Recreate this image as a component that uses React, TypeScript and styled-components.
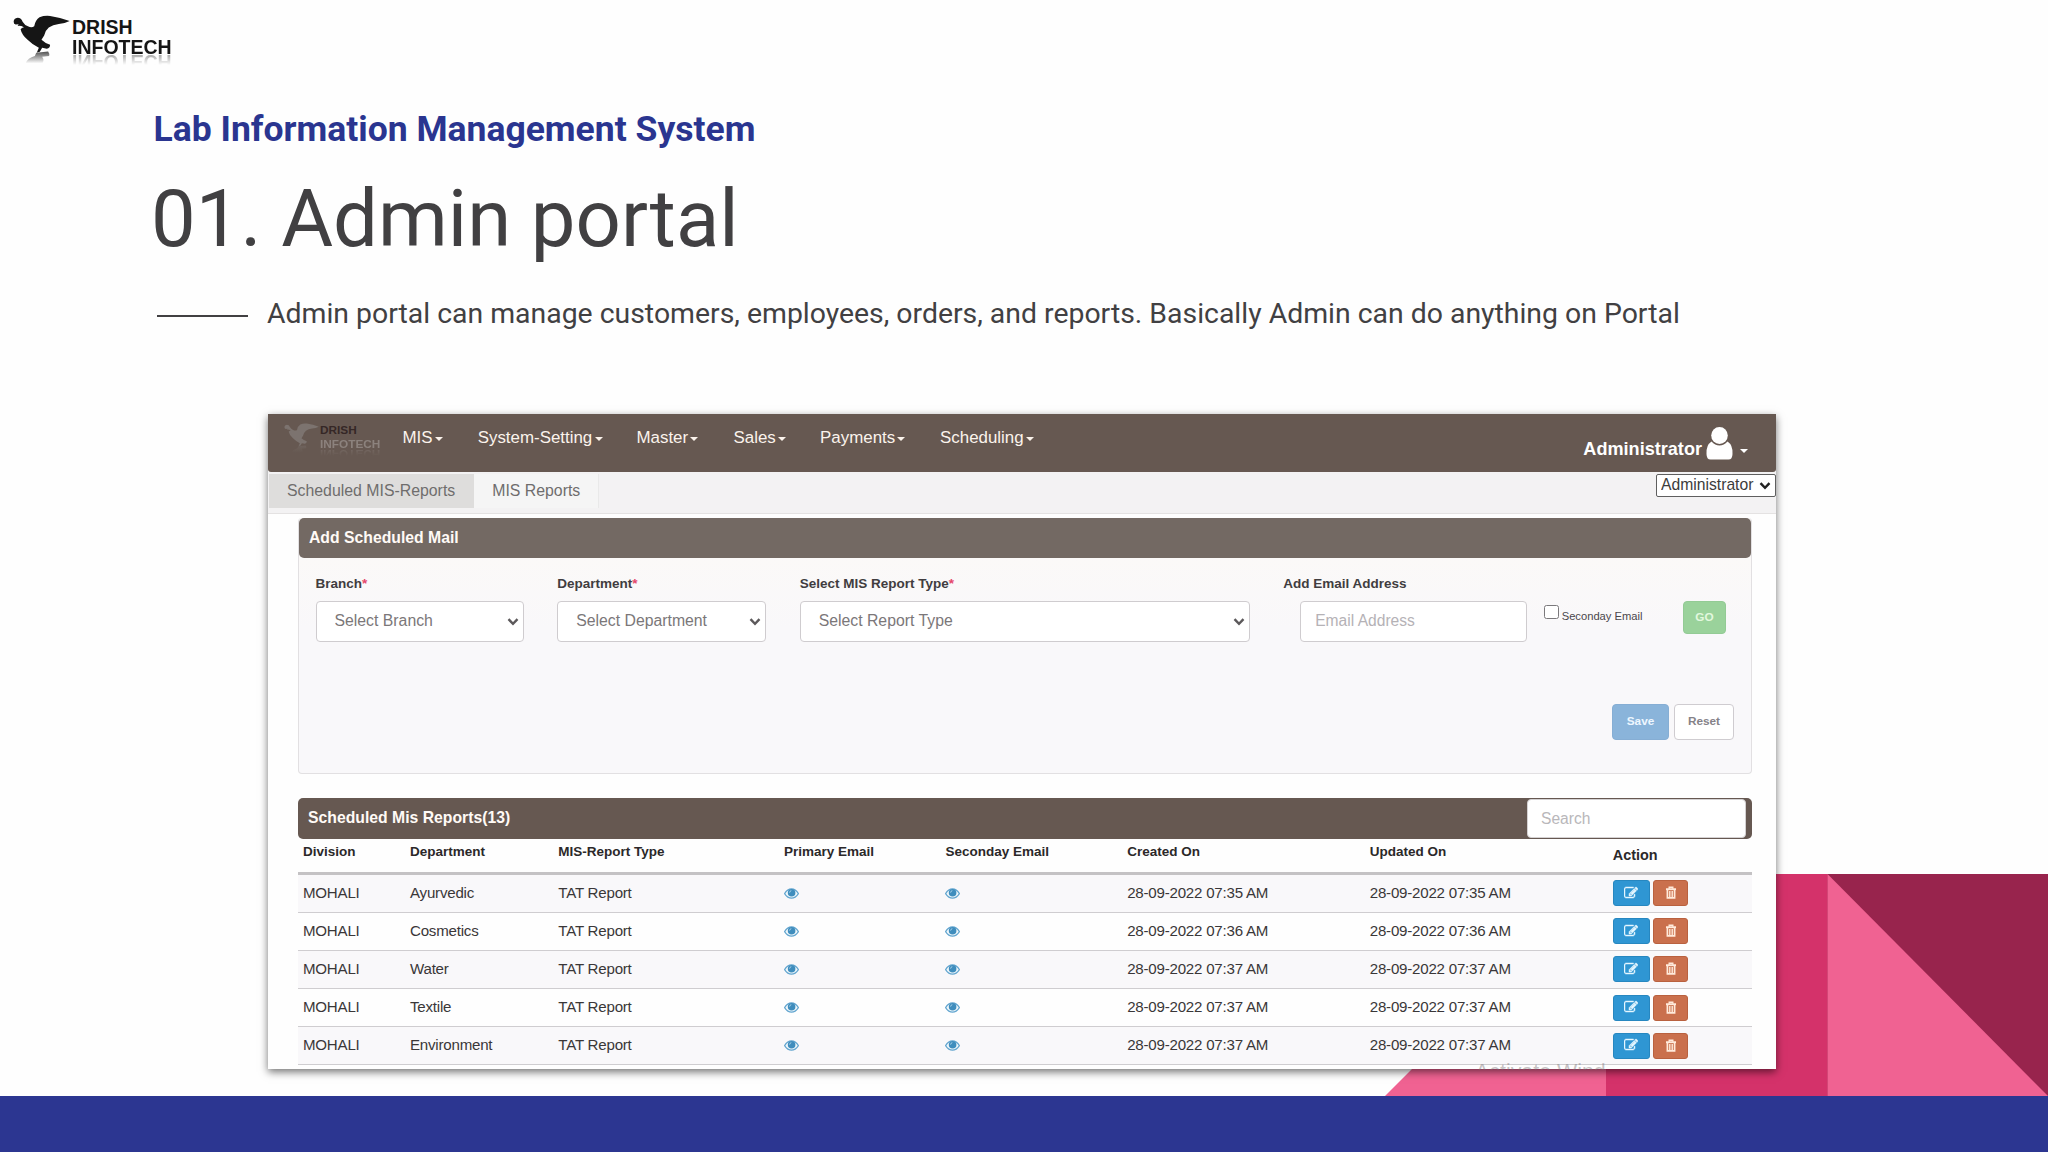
import React from "react";
import styled, { createGlobalStyle } from "styled-components";

const GlobalStyle = createGlobalStyle`
  * { box-sizing: border-box; }
  body { margin: 0; background: #fefefe; }
  input, select, button { font-family: inherit; margin: 0; }
`;

const Slide = styled.main`
  position: relative;
  display: flex;
  flex-direction: column;
  width: 2048px;
  height: 1152px;
  overflow: hidden;
  background: #fefefe;
  font-family: "Liberation Sans", Arial, sans-serif;
`;

const Scenery = styled.svg`
  position: absolute;
  right: 0;
  top: 874px;
`;

/* ---------- brand ---------- */

const BrandRow = styled.header`
  display: flex;
  height: 109px;
  padding: 15px 0 0 13px;
`;

const Brand = styled.div<{ $gap: number }>`
  display: flex;
  align-items: flex-start;
  gap: ${(p) => p.$gap}px;
`;

const Wordmark = styled.div<{ $size: number; $line: number; $top: number; $color: string }>`
  display: flex;
  flex-direction: column;
  margin-top: ${(p) => p.$top}px;
  font-size: ${(p) => p.$size}px;
  line-height: ${(p) => p.$line}px;
  font-weight: 700;
  color: ${(p) => p.$color};
`;

const SecondWord = styled.span<{ $color: string; $offset: number; $fade: number }>`
  color: ${(p) => p.$color};
  -webkit-box-reflect: below ${(p) => p.$offset}px
    linear-gradient(transparent 35%, rgba(0, 0, 0, ${(p) => p.$fade}) 85%);
`;

const BirdSvg = styled.svg`
  display: block;
  flex: none;
`;

function Bird({ width, color, id, glow }: { width: number; color: string; id: string; glow: number }) {
  return (
    <BirdSvg width={width} height={(width * 150) / 172} viewBox="40 42 172 150">
      <defs>
        <linearGradient id={id} x1="0" y1="0" x2="0" y2="1">
          <stop offset="0" stopColor={color} stopOpacity={glow} />
          <stop offset="1" stopColor={color} stopOpacity="0" />
        </linearGradient>
      </defs>
      <path
        fill={color}
        d="M42 62Q42 52 54 50Q65 50 69 62Q75 72 85 76Q96 82 104 76Q108 56 120 49Q135 43 152 45Q184 50 211 60Q196 68 178 69Q160 71 148 80Q138 88 134 104L126 117Q136 127 152 132Q152 142 142 144L128 141L121 153L112 155L118 141Q100 133 84 117Q66 101 63 85Q66 80 73 79Q62 73 54 75L57 70L48 71Q42 69 42 62Z"
      />
      <path fill={`url(#${id})`} d="M110 156L146 152Q152 160 149 166L128 168Q136 178 128 188L78 188Q84 172 106 166Z" />
    </BirdSvg>
  );
}

/* ---------- headings ---------- */

const Headings = styled.section`
  display: flex;
  flex-direction: column;
  height: 305px;
  padding-left: 151px;
  font-family: Roboto, sans-serif;
  color: #414042;
  white-space: nowrap;
`;

const Kicker = styled.h2`
  margin: 0 0 20.5px 2.5px;
  font-size: 35.5px;
  line-height: 41px;
  font-weight: 700;
  color: #2a3590;
`;

const Title = styled.h1`
  margin: 0 0 30px;
  font-size: 79.6px;
  line-height: 96px;
  font-weight: 400;
`;

const Lead = styled.div`
  display: flex;
  align-items: flex-start;
  gap: 19.5px;
`;

const Dash = styled.span`
  width: 91px;
  height: 2.5px;
  margin: 18px 0 0 5.5px;
  background: #414042;
`;

const LeadText = styled.p`
  margin: 0;
  font-size: 28.4px;
  line-height: 34px;
`;

/* ---------- application window ---------- */

const AppWindow = styled.section`
  position: relative;
  display: flex;
  flex-direction: column;
  width: 1508px;
  height: 655px;
  margin-left: 268px;
  background: #fefefe;
  box-shadow: 0 3px 8px rgba(0, 0, 0, 0.55);
`;

const NavBar = styled.nav`
  display: flex;
  flex: none;
  height: 57.5px;
  padding: 0 28px 0 16px;
  background: #665851;
  border-radius: 0 0 3px 3px;
`;

const NavBrand = styled.div`
  width: 118.5px;
  padding-top: 9px;
`;

const Menu = styled.ul`
  display: grid;
  grid-template-columns: 75.2px 158.8px 97px 86.6px 120px auto;
  margin: 0;
  padding: 14px 0 0;
  list-style: none;
  font-size: 16.9px;
  line-height: 20px;
  color: #fbf3ec;
`;

const MenuItem = styled.li`
  display: flex;
  align-items: flex-start;
  gap: 2.3px;
  height: 20px;
`;

const Caret = styled.i<{ $top: number }>`
  width: 0;
  height: 0;
  margin-top: ${(p) => p.$top}px;
  border-left: 4.3px solid transparent;
  border-right: 4.3px solid transparent;
  border-top: 4.6px solid currentColor;
`;

const Account = styled.div`
  display: flex;
  align-items: flex-start;
  margin-left: auto;
  font-size: 18.1px;
  line-height: 22px;
  font-weight: 700;
  color: #fff;
`;

const AccountName = styled.span`
  margin: 24px 4px 0 0;
`;

const UserGlyph = styled.svg`
  display: block;
  margin: 13px 7px 0 0;
`;

const SubBar = styled.div`
  display: flex;
  flex: none;
  justify-content: space-between;
  height: 42.5px;
  background: #f3f2f3;
  border-bottom: 1px solid #e4e2e2;
`;

const Tabs = styled.div`
  display: flex;
  align-items: flex-start;
  padding: 2px 0 0 1px;
`;

const Tab = styled.span<{ $active?: boolean }>`
  height: 34.5px;
  padding: 0 18px;
  font-size: 15.85px;
  line-height: 34px;
  color: #6f6d6d;
  background: ${(p) => (p.$active ? "#dedddc" : "#f5f5f5")};
  border-right: 1px solid ${(p) => (p.$active ? "#dedddc" : "#e9e9e9")};
`;

const SelectBox = styled.span`
  position: relative;
  display: block;
`;

const Chevron = styled.svg<{ $right: number; $top: number }>`
  position: absolute;
  right: ${(p) => p.$right}px;
  top: ${(p) => p.$top}px;
  pointer-events: none;
`;

const RoleSelect = styled.select`
  appearance: none;
  display: block;
  width: 120px;
  height: 23px;
  margin-top: 2px;
  padding: 0 0 1px 4px;
  font-size: 15.7px;
  line-height: 20px;
  color: #3c3c3c;
  background: #fff;
  border: 1.3px solid #5f5f5f;
  border-radius: 2px;
`;

const Content = styled.div`
  display: flex;
  flex-direction: column;
  padding: 3.5px 24px 0 30px;
`;

/* ---------- form card ---------- */

const FormCard = styled.section`
  height: 256px;
  margin-bottom: 24.5px;
  background: linear-gradient(#fbf9f8 40px, #f9f8fa 110px);
  border: 1px solid #e2e0e2;
  border-top: 0;
  border-radius: 4px;
`;

const CardTitle = styled.h3<{ $tone: string }>`
  display: flex;
  justify-content: space-between;
  height: 40.5px;
  margin: 0;
  padding: 0 6px 0 10px;
  font-size: 15.75px;
  line-height: 40px;
  font-weight: 700;
  color: #fffaf6;
  background: ${(p) => p.$tone};
  border-radius: 5px;
`;

const FieldRow = styled.div`
  display: flex;
  align-items: flex-start;
  padding: 16.5px 0 0 16.5px;
`;

const Field = styled.label<{ $width: number; $after: number }>`
  display: flex;
  flex-direction: column;
  width: ${(p) => p.$width}px;
  margin-right: ${(p) => p.$after}px;
`;

const Label = styled.span`
  height: 26.5px;
  font-size: 13.5px;
  line-height: 18px;
  font-weight: 700;
  color: #413d3f;
  white-space: nowrap;
`;

const Required = styled.span`
  color: #e5476b;
`;

const Select = styled.select`
  appearance: none;
  display: block;
  width: 100%;
  height: 40.5px;
  padding: 0 0 1px 18px;
  font-size: 15.8px;
  color: #7b7779;
  background: #fff;
  border: 1px solid #cfcccf;
  border-radius: 4px;
`;

const TextInput = styled.input<{ $indent: number; $width: number }>`
  width: ${(p) => p.$width}px;
  height: 40.5px;
  margin-left: ${(p) => p.$indent}px;
  padding: 0 0 1px 14px;
  font-size: 15.6px;
  color: #555;
  background: #fff;
  border: 1px solid #cfcccf;
  border-radius: 4px;
  &::placeholder { color: #b5b2b6; opacity: 1; }
`;

const CheckField = styled.label`
  display: flex;
  gap: 3px;
  width: 138.5px;
  margin-top: 30px;
  font-size: 11.2px;
  line-height: 22px;
  color: #4a474b;
`;

const CheckBox = styled.input`
  appearance: none;
  width: 14.5px;
  height: 14.5px;
  background: #fff;
  border: 1.3px solid #7b797c;
  border-radius: 2.5px;
`;

const Button = styled.button<{ $bg: string; $fg: string; $edge: string; $w: number; $h: number }>`
  width: ${(p) => p.$w}px;
  height: ${(p) => p.$h}px;
  padding: 0 0 1px;
  font-size: 11.8px;
  font-weight: 700;
  color: ${(p) => p.$fg};
  background: ${(p) => p.$bg};
  border: 1px solid ${(p) => p.$edge};
  border-radius: 4px;
`;

const GoSlot = styled.div`
  margin-top: 26px;
`;

const FormActions = styled.div`
  display: flex;
  justify-content: flex-end;
  gap: 5px;
  padding: 62px 17px 0 0;
`;

/* ---------- reports table ---------- */

const SearchInput = styled.input`
  width: 219px;
  height: 39px;
  margin-top: 0.5px;
  padding: 1px 0 0 13px;
  font-size: 15.6px;
  background: #fff;
  border: 1px solid #d4d1d2;
  border-radius: 4px;
  &::placeholder { color: #b9b7ba; opacity: 1; }
`;

const Table = styled.div`
  display: flex;
  flex-direction: column;
  margin-left: -0.5px;
`;

const columns = "107px 148.3px 225.7px 161.5px 181.7px 242.6px 243px 1fr";

const HeadRow = styled.div`
  display: grid;
  grid-template-columns: ${columns};
  height: 36px;
  padding-left: 5.5px;
  font-weight: 700;
  color: #2b2829;
  border-bottom: 3px solid #c4c2c4;
`;

const HeadCell = styled.span<{ $action?: boolean }>`
  font-size: ${(p) => (p.$action ? 14.4 : 13.5)}px;
  line-height: ${(p) => (p.$action ? 33 : 25)}px;
`;

const Row = styled.div`
  display: grid;
  grid-template-columns: ${columns};
  height: 38.2px;
  padding-left: 5.5px;
  font-size: 15.1px;
  letter-spacing: -0.22px;
  line-height: 36.5px;
  color: #3a3738;
  border-bottom: 1px solid #cfcdd0;
  background: #fefefe;
  &:nth-child(even) { background: #f9f8fa; }
`;

const Actions = styled.span`
  display: flex;
  gap: 3.5px;
  padding: 5.6px 0 0;
`;

const IconButton = styled.button<{ $bg: string; $edge: string; $w: number }>`
  display: flex;
  align-items: center;
  justify-content: center;
  width: ${(p) => p.$w}px;
  height: 26px;
  padding: 0 0 1px;
  background: ${(p) => p.$bg};
  border: 1px solid ${(p) => p.$edge};
  border-radius: 3px;
`;

const IconCell = styled.span`
  display: flex;
  align-items: center;
`;

const Watermark = styled.div`
  position: absolute;
  left: 1207px;
  bottom: -1px;
  width: 136px;
  height: 7px;
  overflow: hidden;
  font-size: 21.4px;
  line-height: 22px;
  color: rgba(120, 112, 116, 0.42);
  white-space: nowrap;
`;

const WatermarkText = styled.span`
  display: block;
  margin-top: -2px;
`;

const Footer = styled.footer`
  position: relative;
  flex: none;
  height: 56.5px;
  margin-top: auto;
  background: #2c3691;
`;

const ChevronIcon = ({ right, top, color }: { right: number; top: number; color: string }) => (
  <Chevron $right={right} $top={top} width="12" height="8" viewBox="0 0 12 8">
    <path d="M1.5 1.2L6 5.8L10.5 1.2" fill="none" stroke={color} strokeWidth="2.4" />
  </Chevron>
);

const EyeIcon = () => (
  <svg width="15" height="11" viewBox="0 0 15 11">
    <path d="M.6 5.600Q3.400 .800 7.500 .800T14.400 5.600Q11.400 10.200 7.500 10.200T.6 5.600Z" fill="#eff7fb" stroke="#62a5cf" strokeWidth="1.200" />
    <circle cx="7.600" cy="4.800" r="3.800" fill="#3f8dbd" />
    <path d="M5.600 4.600Q5.700 2.900 7.300 2.700" fill="none" stroke="#a9d1e8" strokeWidth="1" />
  </svg>
);

const EditIcon = () => (
  <svg width="14" height="14" viewBox="0 0 1792 1792" fill="#e6f7ff" stroke="#e6f7ff" strokeWidth="60">
    <path d="M888 1184l116-116-152-152-116 116v56h96v96h56zm440-720q-16-16-33 1l-350 350q-17 17-1 33t33-1l350-350q17-17 1-33zm80 594v190q0 119-84.500 203.500t-203.500 84.500h-832q-119 0-203.500-84.500t-84.500-203.500v-832q0-119 84.500-203.500t203.500-84.500h832q63 0 117 25 15 7 18 23 3 17-9 29l-49 49q-14 14-32 8-23-6-45-6h-832q-66 0-113 47t-47 113v832q0 66 47 113t113 47h832q66 0 113-47t47-113v-126q0-13 9-22l64-64q15-15 35-7t20 29zm-96-738l288 288-672 672h-288v-288zm444 132l-92 92-288-288 92-92q28-28 68-28t68 28l152 152q28 28 28 68t-28 68z" />
  </svg>
);

const TrashIcon = () => (
  <svg width="12" height="13" viewBox="0 0 12 13" fill="none" stroke="#ffeadb">
    <path d="M1 3.200H11" strokeWidth="1.900" />
    <path d="M4.200 2.700V1.200H7.800V2.700" strokeWidth="1.400" />
    <path d="M2.400 4V11.800H9.600V4" strokeWidth="1.700" />
    <path d="M4.800 5V11M7.200 5V11" strokeWidth="1.400" />
  </svg>
);

const menu = ["MIS", "System-Setting", "Master", "Sales", "Payments", "Scheduling"];
const headers = ["Division", "Department", "MIS-Report Type", "Primary Email", "Seconday Email", "Created On", "Updated On"];
const reports = [
  { department: "Ayurvedic", stamp: "28-09-2022 07:35 AM" },
  { department: "Cosmetics", stamp: "28-09-2022 07:36 AM" },
  { department: "Water", stamp: "28-09-2022 07:37 AM" },
  { department: "Textile", stamp: "28-09-2022 07:37 AM" },
  { department: "Environment", stamp: "28-09-2022 07:37 AM" },
];

function SelectField({ label, option, width, after }: { label: string; option: string; width: number; after: number }) {
  return (
    <Field $width={width} $after={after}>
      <Label>
        {label}
        <Required>*</Required>
      </Label>
      <SelectBox>
        <Select>
          <option>{option}</option>
        </Select>
        <ChevronIcon right={5} top={17} color="#5c595b" />
      </SelectBox>
    </Field>
  );
}

export default function App() {
  return (
    <Slide>
      <GlobalStyle />
      <Scenery width="663" height="222" viewBox="0 0 663 222">
        <path d="M0 222L221 1V222Z" fill="#f06292" />
        <path d="M221 0H443V222H221Z" fill="#d4326a" />
        <path d="M442.500 0H663V222H442.500Z" fill="#98244d" />
        <path d="M442.500 0V222H663Z" fill="#f06292" />
      </Scenery>

      <BrandRow>
        <Brand $gap={2}>
          <Bird width={57} color="#151515" id="shadeMain" glow={0.75} />
          <Wordmark $size={19.5} $line={20} $top={2} $color="#151515">
            <span>DRISH</span>
            <SecondWord $color="#151515" $offset={-5} $fade={0.35}>INFOTECH</SecondWord>
          </Wordmark>
        </Brand>
      </BrandRow>

      <Headings>
        <Kicker>Lab Information Management System</Kicker>
        <Title>01. Admin portal</Title>
        <Lead>
          <Dash />
          <LeadText>
            Admin portal can manage customers, employees, orders, and reports. Basically Admin can do anything on Portal
          </LeadText>
        </Lead>
      </Headings>

      <AppWindow>
        <NavBar>
          <NavBrand>
            <Brand $gap={1}>
              <Bird width={35} color="#7c736f" id="shadeNav" glow={0.4} />
              <Wordmark $size={11.8} $line={14} $top={0} $color="#352726">
                <span>DRISH</span>
                <SecondWord $color="#8c827d" $offset={-4} $fade={0.4}>INFOTECH</SecondWord>
              </Wordmark>
            </Brand>
          </NavBrand>
          <Menu>
            {menu.map((name) => (
              <MenuItem key={name}>
                {name}
                <Caret $top={9} />
              </MenuItem>
            ))}
          </Menu>
          <Account>
            <AccountName>Administrator</AccountName>
            <UserGlyph width="27" height="33" viewBox="0 0 27 33" fill="#fff">
              <ellipse cx="13.500" cy="8.500" rx="8.300" ry="8.500" />
              <path d="M5.500 14.500Q9 18.600 13.500 18.600T21.500 14.500Q27 18 26.500 27Q26.400 32.500 22.500 32.500H4.500Q.600 32.500 .500 27Q0 18 5.500 14.500Z" />
            </UserGlyph>
            <Caret $top={35} />
          </Account>
        </NavBar>

        <SubBar>
          <Tabs>
            <Tab $active>Scheduled MIS-Reports</Tab>
            <Tab>MIS Reports</Tab>
          </Tabs>
          <SelectBox>
            <RoleSelect>
              <option>Administrator</option>
            </RoleSelect>
            <ChevronIcon right={5} top={10} color="#222" />
          </SelectBox>
        </SubBar>

        <Content>
          <FormCard>
            <CardTitle $tone="#736963">Add Scheduled Mail</CardTitle>
            <FieldRow>
              <SelectField label="Branch" option="Select Branch" width={208} after={33.7} />
              <SelectField label="Department" option="Select Department" width={208.7} after={33.8} />
              <SelectField label="Select MIS Report Type" option="Select Report Type" width={450} after={33.5} />
              <Field $width={244} $after={17}>
                <Label>Add Email Address</Label>
                <TextInput $indent={17} $width={227} placeholder="Email Address" />
              </Field>
              <CheckField>
                <CheckBox type="checkbox" />
                Seconday Email
              </CheckField>
              <GoSlot>
                <Button $bg="#9ad29b" $fg="#e2f8de" $edge="#93cb95" $w={43.5} $h={33}>GO</Button>
              </GoSlot>
            </FieldRow>
            <FormActions>
              <Button $bg="#8ab4da" $fg="#eef7ff" $edge="#86aed4" $w={57} $h={36}>Save</Button>
              <Button $bg="#fff" $fg="#858288" $edge="#cfccd0" $w={60} $h={36}>Reset</Button>
            </FormActions>
          </FormCard>

          <CardTitle as="div" $tone="#665851">
            Scheduled Mis Reports(13)
            <SearchInput placeholder="Search" />
          </CardTitle>

          <Table>
            <HeadRow>
              {headers.map((name) => (
                <HeadCell key={name}>{name}</HeadCell>
              ))}
              <HeadCell $action>Action</HeadCell>
            </HeadRow>
            {reports.map((report) => (
              <Row key={report.department}>
                <span>MOHALI</span>
                <span>{report.department}</span>
                <span>TAT Report</span>
                <IconCell>
                  <EyeIcon />
                </IconCell>
                <IconCell>
                  <EyeIcon />
                </IconCell>
                <span>{report.stamp}</span>
                <span>{report.stamp}</span>
                <Actions>
                  <IconButton $bg="#2f96d3" $edge="#2787c0" $w={37}>
                    <EditIcon />
                  </IconButton>
                  <IconButton $bg="#ca704d" $edge="#b9613f" $w={35}>
                    <TrashIcon />
                  </IconButton>
                </Actions>
              </Row>
            ))}
          </Table>
        </Content>
        <Watermark>
          <WatermarkText>Activate Wind</WatermarkText>
        </Watermark>
      </AppWindow>

      <Footer />
    </Slide>
  );
}
